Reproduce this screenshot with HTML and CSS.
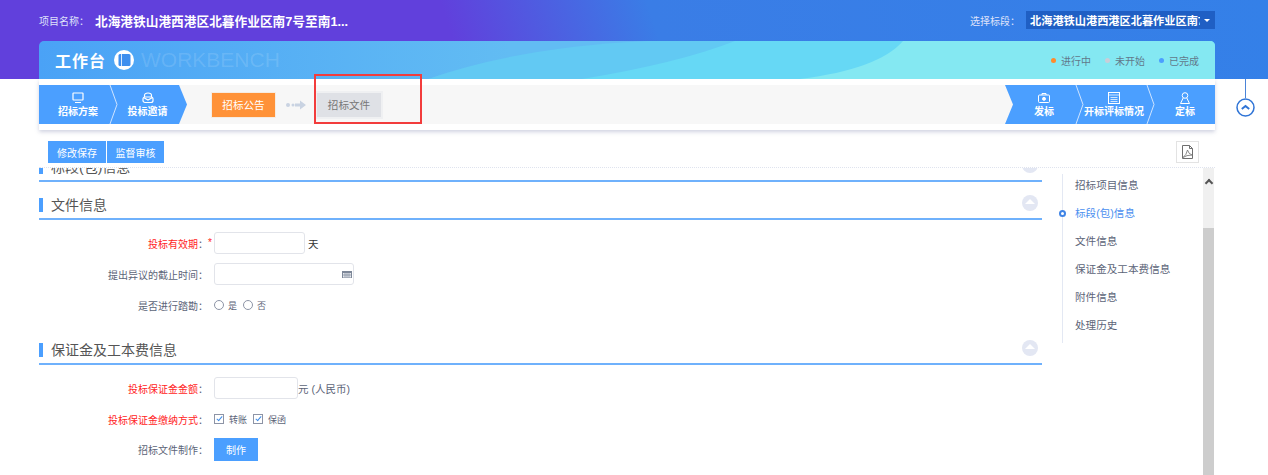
FILE: index.html
```html
<!DOCTYPE html>
<html lang="zh-CN">
<head>
    <meta charset="UTF-8">
    <title>招标文件</title>
    <link rel="stylesheet" href="styles.css">
</head>
<body>

    <!-- 顶部 -->
    <header class="top">
        <div class="top-row">
            <div class="project">
                <span class="top-label">项目名称：</span>
                <span class="project-name">北海港铁山港西港区北暮作业区南7号至南1...</span>
            </div>
            <div class="section-select">
                <span class="top-label">选择标段：</span>
                <div class="select-box">
                    <span class="select-text">北海港铁山港西港区北暮作业区南7号至南10号泊位</span>
                    <span class="select-caret"></span>
                </div>
            </div>
        </div>
        <div class="title-bar">
            <svg class="title-waves" width="1176" height="38" viewBox="0 0 1176 38">
                <path d="M389 38Q480 6 609 0H1176V38Z" fill="#62c9f3"/>
                <path d="M543 38Q640 22 696 0H1176V38Z" fill="#66d8f5"/>
                <path d="M761 38Q840 28 864 0H1176V38Z" fill="#84e8f2"/>
            </svg>
            <span class="title-text">工作台</span>
            <span class="title-icon">
                <svg width="20" height="20" viewBox="0 0 20 20">
                    <circle cx="10" cy="10" r="10" fill="#fff"/>
                    <rect x="4.500" y="4" width="12" height="12" rx="1.500" fill="#3f8fee"/>
                    <path d="M7.500 4v12" stroke="#fff" stroke-width="0.800"/>
                </svg>
            </span>
            <span class="title-en">WORKBENCH</span>
            <div class="legend">
                <span class="legend-item"><i class="dot dot-orange"></i>进行中</span>
                <span class="legend-item"><i class="dot dot-gray"></i>未开始</span>
                <span class="legend-item"><i class="dot dot-blue"></i>已完成</span>
            </div>
        </div>
    </header>

    <div class="panel">
        <div class="step-bar">
            <div class="steps steps-left">
                <div class="step step-w1">
                    <svg width="12" height="12" viewBox="0 0 12 12" fill="none" stroke="#fff" stroke-width="1.200">
                        <rect x="1" y="1" width="10" height="7" rx="0.500"/>
                        <path d="M3 10.500h6"/>
                    </svg>
                    <span>招标方案</span>
                </div>
                <svg class="step-sep" width="9" height="39" viewBox="0 0 9 39"><path d="M1 0l7 19.5L1 39" fill="none" stroke="#cfe4ff"/></svg>
                <div class="step step-w2">
                    <svg width="12" height="12" viewBox="0 0 12 12" fill="none" stroke="#fff" stroke-width="1.200">
                        <path d="M2.500 5V3.500Q2.500 1 6 1t3.500 2.500V5"/>
                        <rect x="1" y="5" width="10" height="5.500" rx="2"/>
                        <path d="M1.500 5.500L6 8l4.500-2.500"/>
                    </svg>
                    <span>投标邀请</span>
                </div>
            </div>

            <div class="flow">
                <span class="flow-btn flow-active">招标公告</span>
                <svg class="flow-arrow" width="20" height="10" viewBox="0 0 20 10">
                    <circle cx="2" cy="5" r="2" fill="#c9d3e2"/>
                    <circle cx="7" cy="5" r="1.500" fill="#c9d3e2"/>
                    <path d="M9 3.500h5V0.500L20 5l-6 4.500v-3H9z" fill="#c9d3e2"/>
                </svg>
                <span class="flow-btn flow-current">招标文件</span>
            </div>

            <div class="steps steps-right">
                <div class="step step-w3">
                    <svg width="12" height="12" viewBox="0 0 12 12" fill="none" stroke="#fff">
                        <path d="M4 3V1.500h4V3"/>
                        <rect x="0.500" y="3" width="11" height="7.500" rx="1"/>
                        <circle cx="6" cy="6.800" r="1.500" fill="#fff"/>
                    </svg>
                    <span>发标</span>
                </div>
                <svg class="step-sep" width="9" height="39" viewBox="0 0 9 39"><path d="M1 0l7 19.5L1 39" fill="none" stroke="#cfe4ff"/></svg>
                <div class="step step-w4">
                    <svg width="12" height="12" viewBox="0 0 12 12" fill="none" stroke="#fff">
                        <rect x="0.500" y="0.500" width="11" height="11"/>
                        <path d="M0.500 3h11M2.500 5.500h7M2.500 7.500h7M2.500 9.500h7" stroke-opacity="0.750"/>
                    </svg>
                    <span>开标评标情况</span>
                </div>
                <svg class="step-sep" width="9" height="39" viewBox="0 0 9 39"><path d="M1 0l7 19.5L1 39" fill="none" stroke="#cfe4ff"/></svg>
                <div class="step step-w5">
                    <svg width="12" height="12" viewBox="0 0 12 12" fill="none" stroke="#fff">
                        <circle cx="6" cy="3.500" r="2.800"/>
                        <path d="M4.200 6L1.500 11.500h9L7.800 6"/>
                    </svg>
                    <span>定标</span>
                </div>
            </div>
        </div>
    </div>

    <div class="toolbar">
        <div class="tool-group">
            <button class="tool-btn">修改保存</button>
            <button class="tool-btn">监督审核</button>
        </div>
        <div class="pdf-btn">
            <svg width="13" height="14" viewBox="0 0 13 14" fill="none" stroke="#6f6f6f">
                <path d="M1.500 13.500V0.500h7l3 3v10z"/>
                <path d="M8.500 0.500v3h3"/>
                <path d="M2 12.500Q5.500 10 6.500 5q1 4 4.500 5-5.500 0-9 2.500z" stroke-width="0.800"/>
            </svg>
        </div>
    </div>

    <div class="body-wrap">
        <div class="content">
            <section class="sec sec-first">
                <div class="sec-head">
                    <h2>标段(包)信息</h2>
                    <span class="collapse"></span>
                </div>
            </section>

            <section class="sec">
                <div class="sec-head">
                    <h2>文件信息</h2>
                    <span class="collapse"></span>
                </div>
                <div class="rows">
                    <div class="row">
                        <label class="row-label"><em>投标有效期</em>：<b class="star">*</b></label>
                        <span class="input input-91"></span>
                        <span class="unit-day">天</span>
                    </div>
                    <div class="row">
                        <label class="row-label">提出异议的截止时间：</label>
                        <span class="input input-140">
                            <svg width="10" height="7" viewBox="0 0 10 7">
                                <rect width="10" height="7" fill="#7d8798"/>
                                <path d="M1 2h8v4.500H1z" fill="#e6e9ee"/>
                                <path d="M3 2v4.500M5 2v4.500M7 2v4.500M1 4h8" stroke="#7d8798" stroke-width="0.700"/>
                            </svg>
                        </span>
                    </div>
                    <div class="row">
                        <label class="row-label">是否进行踏勘：</label>
                        <span class="opt"><i class="radio"></i>是</span>
                        <span class="opt"><i class="radio"></i>否</span>
                    </div>
                </div>
            </section>

            <section class="sec sec-money">
                <div class="sec-head">
                    <h2>保证金及工本费信息</h2>
                    <span class="collapse"></span>
                </div>
                <div class="rows">
                    <div class="row">
                        <label class="row-label"><em>投标保证金金额</em>：</label>
                        <span class="input input-84"></span>
                        <span class="unit">元 (人民币)</span>
                    </div>
                    <div class="row">
                        <label class="row-label"><em>投标保证金缴纳方式</em>：</label>
                        <span class="opt"><i class="check"></i>转账</span>
                        <span class="opt"><i class="check"></i>保函</span>
                    </div>
                    <div class="row row-btn">
                        <label class="row-label">招标文件制作：</label>
                        <button class="make-btn">制作</button>
                    </div>
                </div>
            </section>
        </div>

        <nav class="side-nav">
            <a>招标项目信息</a>
            <a class="active">标段(包)信息</a>
            <a>文件信息</a>
            <a>保证金及工本费信息</a>
            <a>附件信息</a>
            <a>处理历史</a>
        </nav>

        <div class="scrollbar">
            <span class="scroll-up"></span>
            <span class="scroll-thumb"></span>
        </div>
    </div>

    <!-- 标注框 -->
    <div class="mark-box"></div>

    <!-- 收起按钮 -->
    <div class="fold">
        <span class="fold-line"></span>
        <svg width="19" height="19" viewBox="0 0 19 19" fill="none" stroke="#2f74d6">
            <circle cx="9.500" cy="9.500" r="8.500" stroke-width="1.500"/>
            <path d="M5.800 11l3.700-3 3.700 3" stroke-width="2"/>
        </svg>
    </div>

</body>
</html>
```

FILE: styles.css
```css
/* 页面 */
body {
    margin: 0;
    height: 475px;
    overflow: hidden;
    position: relative;
    background-color: #fff;
    color: #5c6478;
    font-family: "Liberation Sans", "Noto Sans CJK SC", sans-serif;
    font-size: 10px;
}
/* 顶部 */
.top {
    height: 79px;
    padding: 0 53px 0 39px;
    background: linear-gradient(72deg, #6140dc 36%, #3a7de6 52%, #3480e8);
}
.top-row {
    height: 41px;
    display: flex;
    justify-content: space-between;
    align-items: center;
}
.project, .section-select {
    display: flex;
    align-items: center;
}
.project {
    margin-top: -1px;
}
.top-label {
    color: #dfe2fa;
    font-size: 10px;
    white-space: nowrap;
}
.project-name {
    margin-left: 6px;
    color: #fff;
    font-size: 12.7px;
    font-weight: bold;
}
.section-select {
    margin-top: -1px;
}
.select-box {
    width: 189px;
    height: 18px;
    margin-left: 6px;
    padding: 0 4px;
    box-sizing: border-box;
    display: flex;
    align-items: center;
    background-color: #1f5fc4;
}
.select-text {
    width: 170px;
    overflow: hidden;
    white-space: nowrap;
    color: #fff;
    font-size: 11.2px;
    font-weight: bold;
}
.select-caret {
    margin-left: 4px;
    border-left: 3px solid transparent;
    border-right: 3px solid transparent;
    border-top: 3px solid #fff;
}
.title-bar {
    height: 38px;
    padding: 0 16px;
    box-sizing: border-box;
    position: relative;
    overflow: hidden;
    display: flex;
    align-items: center;
    border-radius: 5px 5px 0 0;
    background: linear-gradient(90deg, #4aa2f6, #62bcf3 40%);
}
.title-waves {
    position: absolute;
    left: 0;
    top: 0;
}
.title-text, .title-icon, .title-en, .legend {
    position: relative;
}
.title-text {
    color: #fff;
    font-size: 16px;
    font-weight: bold;
    letter-spacing: 1px;
}
.title-icon {
    height: 20px;
    margin-left: 8px;
}
.title-en {
    margin-left: 7px;
    color: rgba(255, 255, 255, 0.13);
    font-size: 21px;
}
.legend {
    margin-left: auto;
    display: flex;
    gap: 14px;
}
.legend-item {
    display: flex;
    align-items: center;
    color: #62788a;
}
.dot {
    width: 5px;
    height: 5px;
    margin-right: 5px;
    border-radius: 50%;
}
.dot-orange { background-color: #ff8b2c; }
.dot-gray { background-color: #c9ced8; }
.dot-blue { background-color: #4b9fff; }

/* 步骤条 */
.panel {
    margin: 0 53px 0 39px;
    padding: 6px 0;
    background-color: #fff;
    box-shadow: 0 2px 4px rgba(120, 130, 170, 0.35);
}
.step-bar {
    height: 39px;
    display: flex;
    background-color: #f7f7f7;
}
.steps {
    display: flex;
    background-color: #4b9fff;
}
.steps-left {
    width: 148px;
    clip-path: polygon(0 0, 140px 0, 148px 50%, 140px 100%, 0 100%);
}
.steps-right {
    width: 210px;
    margin-left: auto;
    padding-left: 2px;
    box-sizing: border-box;
    clip-path: polygon(0 0, 100% 0, 100% 100%, 0 100%, 8px 50%);
}
.step {
    flex: none;
    box-sizing: border-box;
    padding-top: 1px;
    display: flex;
    flex-direction: column;
    align-items: center;
    justify-content: center;
    gap: 1px;
    color: #fff;
    font-size: 10px;
    font-weight: bold;
    line-height: 14px;
}
.step-w1 { width: 70px; padding-left: 8px; }
.step-w2 { width: 61px; padding-right: 2px; }
.step-w3 { width: 68px; padding-left: 6px; }
.step-w4 { width: 62px; padding-right: 2px; }
.step-w5 { width: 60px; }
.step-sep {
    flex: none;
}
.flow {
    margin-left: 25px;
    display: flex;
    align-items: center;
}
.flow-btn {
    width: 63px;
    height: 24px;
    display: flex;
    align-items: center;
    justify-content: center;
    font-size: 10.6px;
}
.flow-active {
    background-color: #ff9238;
    color: #fff;
    box-shadow: 0 0 0 1px #f6ece2;
}
.flow-arrow {
    margin: 0 11px;
}
.flow-current {
    width: 64px;
    background-color: #dfe1e6;
    color: #777;
    box-shadow: 0 0 0 2px #eff0f2;
}

/* 工具栏 */
.toolbar {
    margin: 11px 69px 0 48px;
    height: 22px;
    display: flex;
    justify-content: space-between;
}
.tool-group {
    display: flex;
    gap: 1px;
}
.tool-btn {
    width: 58px;
    height: 22px;
    padding: 0;
    border: none;
    background-color: #4b9fff;
    color: #fff;
    font-family: inherit;
    font-size: 10px;
}
.tool-btn + .tool-btn {
    width: 57px;
}
.pdf-btn {
    width: 23px;
    height: 22px;
    box-sizing: border-box;
    display: flex;
    align-items: center;
    justify-content: center;
    border: 1px solid #e3e3e3;
}

/* 内容区 */
.body-wrap {
    margin: 4px 53px 0 39px;
    height: 308px;
    overflow: hidden;
    box-sizing: border-box;
    display: flex;
    border-top: 1px dotted #dfe3ee;
}
.content {
    width: 1003px;
    flex: none;
}
.sec-first {
    margin-top: -14px;
    margin-bottom: 10px;
}
.sec-head {
    height: 28px;
    box-sizing: border-box;
    padding-right: 4px;
    display: flex;
    align-items: center;
    justify-content: space-between;
    border-bottom: 2px solid #6fb1fc;
}
.sec-head h2 {
    margin: 0;
    padding-left: 8px;
    border-left: 4px solid #4b9fff;
    color: #555;
    font-size: 14px;
    font-weight: normal;
    line-height: 14px;
}
.collapse {
    width: 16px;
    height: 16px;
    margin-top: -5px;
    border-radius: 50%;
    background-color: #e3e7f3;
    display: flex;
    align-items: center;
    justify-content: center;
}
.collapse::before {
    content: "";
    margin-top: -2px;
    border-left: 5px solid transparent;
    border-right: 5px solid transparent;
    border-bottom: 5px solid #fff;
}
.rows {
    padding-top: 12px;
    display: flex;
    flex-direction: column;
    gap: 9px;
}
.row {
    height: 22px;
    display: flex;
    align-items: center;
}
.row-label {
    width: 175px;
    padding-right: 6px;
    box-sizing: border-box;
    position: relative;
    text-align: right;
    white-space: nowrap;
    color: #5c6478;
}
.row-label em {
    color: #ff2424;
    font-style: normal;
}
.star {
    position: absolute;
    left: 169px;
    top: 1px;
    color: #ff2424;
    font-weight: normal;
}
.input {
    height: 22px;
    box-sizing: border-box;
    display: flex;
    align-items: center;
    justify-content: flex-end;
    padding-right: 1px;
    border: 1px solid #e2e4ea;
    border-radius: 3px;
}
.input-91 { width: 91px; }
.input-140 { width: 140px; }
.input-84 { width: 84px; }
.unit-day {
    margin-left: 3px;
    color: #333;
    font-size: 10.5px;
}
.unit {
    color: #5c6478;
    font-size: 10.5px;
}
.opt {
    margin-right: 6px;
    display: flex;
    align-items: center;
    color: #5c6478;
    font-size: 9px;
}
.radio {
    width: 8px;
    height: 8px;
    margin-right: 4px;
    border: 1px solid #8d94a6;
    border-radius: 50%;
}
.check {
    width: 8px;
    height: 8px;
    margin-right: 5px;
    position: relative;
    border: 1px solid #8d94a6;
}
.check::after {
    content: "";
    position: absolute;
    left: 3px;
    top: 0;
    width: 2px;
    height: 5px;
    border: solid #3f8de8;
    border-width: 0 1px 1px 0;
    transform: rotate(40deg);
}
.sec-money {
    margin-top: 21px;
}
.row-btn {
    height: 23px;
    margin-top: -1px;
}
.make-btn {
    width: 44px;
    height: 23px;
    padding: 0;
    border: none;
    background-color: #4b9fff;
    color: #fff;
    font-family: inherit;
    font-size: 10px;
}

/* 右侧导航 */
.side-nav {
    width: 141px;
    height: 169px;
    flex: none;
    margin: 6px 0 0 20px;
    padding-left: 12px;
    box-sizing: border-box;
    display: flex;
    flex-direction: column;
    gap: 6px;
    border-left: 1px solid #e3e8f3;
    color: #5c6478;
    font-size: 10.6px;
}
.side-nav a {
    height: 22px;
    line-height: 22px;
    position: relative;
    white-space: nowrap;
}
.side-nav .active {
    color: #4b8ff0;
}
.side-nav .active::before {
    content: "";
    position: absolute;
    left: -16px;
    top: 8px;
    width: 3px;
    height: 3px;
    border: 2px solid #3f84e6;
    border-radius: 50%;
    background-color: #fff;
}
.scrollbar {
    width: 11px;
    flex: none;
    position: relative;
    background-color: #f0f0f0;
}
.scroll-up {
    position: absolute;
    left: 3px;
    top: 12px;
    width: 4px;
    height: 4px;
    border: solid #555;
    border-width: 2px 0 0 2px;
    transform: rotate(45deg);
}
.scroll-thumb {
    position: absolute;
    left: 0;
    right: 0;
    top: 60px;
    bottom: 0;
    background-color: #cdcdcd;
}

/* 覆盖元素 */
.mark-box {
    position: absolute;
    left: 314px;
    top: 74px;
    width: 104px;
    height: 46px;
    border: 2px solid #f23c3c;
}
.fold {
    position: absolute;
    left: 1236px;
    top: 79px;
    width: 19px;
    display: flex;
    flex-direction: column;
    align-items: center;
}
.fold-line {
    width: 1px;
    height: 19px;
    background-color: #4b84d8;
}
```
